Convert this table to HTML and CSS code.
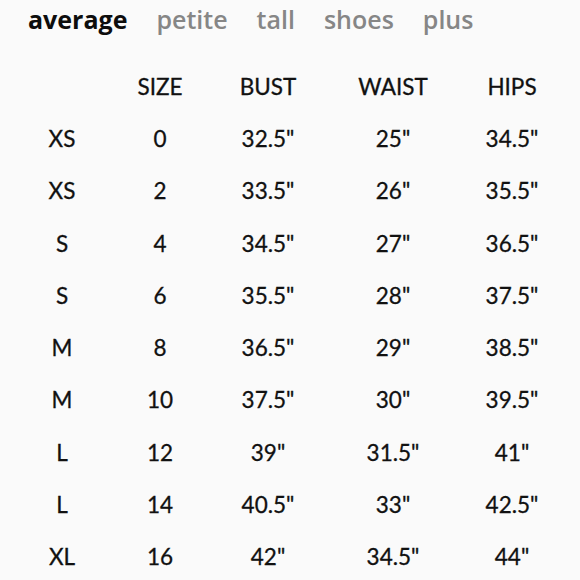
FILE: index.html
```html
<!DOCTYPE html>
<html>
<head>
<meta charset="utf-8">
<link rel="stylesheet" href="styles.css">
</head>
<body>
<nav class="tabs">
  <span class="tab active">average</span>
  <span class="tab">petite</span>
  <span class="tab">tall</span>
  <span class="tab">shoes</span>
  <span class="tab">plus</span>
</nav>
<div class="chart">
  <div class="cell"></div><div class="cell">SIZE</div><div class="cell">BUST</div><div class="cell">WAIST</div><div class="cell">HIPS</div>
  <div class="cell">XS</div><div class="cell">0</div><div class="cell">32.5"</div><div class="cell">25"</div><div class="cell">34.5"</div>
  <div class="cell">XS</div><div class="cell">2</div><div class="cell">33.5"</div><div class="cell">26"</div><div class="cell">35.5"</div>
  <div class="cell">S</div><div class="cell">4</div><div class="cell">34.5"</div><div class="cell">27"</div><div class="cell">36.5"</div>
  <div class="cell">S</div><div class="cell">6</div><div class="cell">35.5"</div><div class="cell">28"</div><div class="cell">37.5"</div>
  <div class="cell">M</div><div class="cell">8</div><div class="cell">36.5"</div><div class="cell">29"</div><div class="cell">38.5"</div>
  <div class="cell">M</div><div class="cell">10</div><div class="cell">37.5"</div><div class="cell">30"</div><div class="cell">39.5"</div>
  <div class="cell">L</div><div class="cell">12</div><div class="cell">39"</div><div class="cell">31.5"</div><div class="cell">41"</div>
  <div class="cell">L</div><div class="cell">14</div><div class="cell">40.5"</div><div class="cell">33"</div><div class="cell">42.5"</div>
  <div class="cell">XL</div><div class="cell">16</div><div class="cell">42"</div><div class="cell">34.5"</div><div class="cell">44"</div>
</div>
</body>
</html>
```
FILE: styles.css
```css
html, body {
  margin: 0;
  padding: 0;
  background: #fafafa;
  width: 580px;
  height: 580px;
  overflow: hidden;
  font-family: Lato, "Noto Sans", sans-serif;
  color: #111;
}
.tabs {
  display: flex;
  gap: 29px;
  padding: 2px 0 0 28px;
  height: 58px;
  box-sizing: border-box;
}
.tab {
  font-family: "Open Sans", Lato, sans-serif;
  font-size: 25px;
  font-weight: 600;
  color: #868686;
  line-height: 34px;
}
.tab.active {
  color: #0d0d0d;
  font-weight: 700;
}
.chart {
  display: grid;
  grid-template-columns: 100px 96px 120px 130px 108px;
  grid-auto-rows: 52.3px;
  padding-left: 12px;
  margin-top: 2px;
}
.cell {
  display: flex;
  align-items: center;
  justify-content: center;
  font-size: 22.5px;
  font-weight: 400;
  -webkit-text-stroke: 0.3px #111;
}
```
